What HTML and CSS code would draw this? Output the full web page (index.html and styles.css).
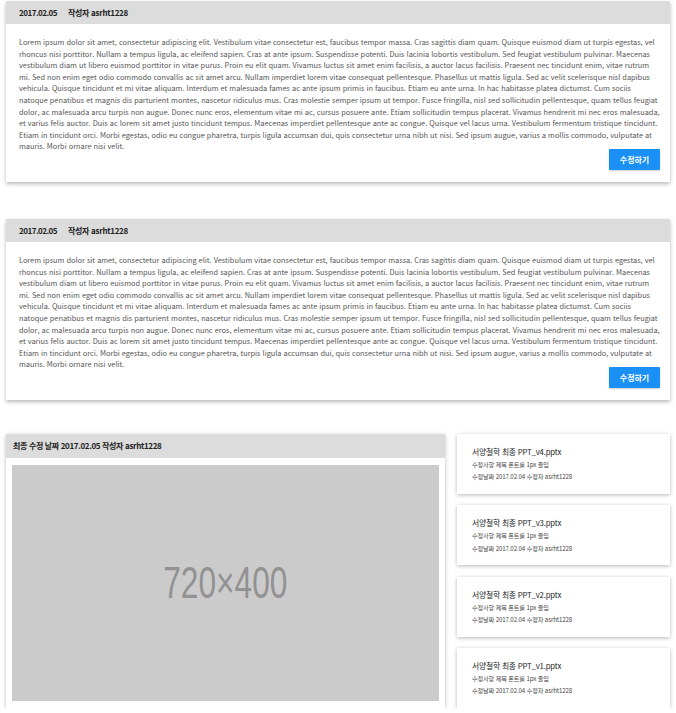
FILE: index.html
```html
<!DOCTYPE html>
<html lang="ko">
<head>
<meta charset="utf-8">
<link rel="stylesheet" href="styles.css">
</head>
<body>
<main class="page">
  <section class="post">
    <div class="post-head"><span class="date">2017.02.05</span><span class="author">작성자 asrht1228</span></div>
    <div class="post-body">
      <p class="text">Lorem ipsum dolor sit amet, consectetur adipiscing elit. Vestibulum vitae consectetur est, faucibus tempor massa. Cras sagittis diam quam. Quisque euismod diam ut turpis egestas, vel rhoncus nisi porttitor. Nullam a tempus ligula, ac eleifend sapien. Cras at ante ipsum. Suspendisse potenti. Duis lacinia lobortis vestibulum. Sed feugiat vestibulum pulvinar. Maecenas vestibulum diam ut libero euismod porttitor in vitae purus. Proin eu elit quam. Vivamus luctus sit amet enim facilisis, a auctor lacus facilisis. Praesent nec tincidunt enim, vitae rutrum mi. Sed non enim eget odio commodo convallis ac sit amet arcu. Nullam imperdiet lorem vitae consequat pellentesque. Phasellus ut mattis ligula. Sed ac velit scelerisque nisl dapibus vehicula. Quisque tincidunt et mi vitae aliquam. Interdum et malesuada fames ac ante ipsum primis in faucibus. Etiam eu ante urna. In hac habitasse platea dictumst. Cum sociis natoque penatibus et magnis dis parturient montes, nascetur ridiculus mus. Cras molestie semper ipsum ut tempor. Fusce fringilla, nisl sed sollicitudin pellentesque, quam tellus feugiat dolor, ac malesuada arcu turpis non augue. Donec nunc eros, elementum vitae mi ac, cursus posuere ante. Etiam sollicitudin tempus placerat. Vivamus hendrerit mi nec eros malesuada, et varius felis auctor. Duis ac lorem sit amet justo tincidunt tempus. Maecenas imperdiet pellentesque ante ac congue. Quisque vel lacus urna. Vestibulum fermentum tristique tincidunt. Etiam in tincidunt orci. Morbi egestas, odio eu congue pharetra, turpis ligula accumsan dui, quis consectetur urna nibh ut nisi. Sed ipsum augue, varius a mollis commodo, vulputate at mauris. Morbi ornare nisi velit.</p>
      <div class="actions"><button class="btn">수정하기</button></div>
    </div>
  </section>

  <section class="post">
    <div class="post-head"><span class="date">2017.02.05</span><span class="author">작성자 asrht1228</span></div>
    <div class="post-body">
      <p class="text">Lorem ipsum dolor sit amet, consectetur adipiscing elit. Vestibulum vitae consectetur est, faucibus tempor massa. Cras sagittis diam quam. Quisque euismod diam ut turpis egestas, vel rhoncus nisi porttitor. Nullam a tempus ligula, ac eleifend sapien. Cras at ante ipsum. Suspendisse potenti. Duis lacinia lobortis vestibulum. Sed feugiat vestibulum pulvinar. Maecenas vestibulum diam ut libero euismod porttitor in vitae purus. Proin eu elit quam. Vivamus luctus sit amet enim facilisis, a auctor lacus facilisis. Praesent nec tincidunt enim, vitae rutrum mi. Sed non enim eget odio commodo convallis ac sit amet arcu. Nullam imperdiet lorem vitae consequat pellentesque. Phasellus ut mattis ligula. Sed ac velit scelerisque nisl dapibus vehicula. Quisque tincidunt et mi vitae aliquam. Interdum et malesuada fames ac ante ipsum primis in faucibus. Etiam eu ante urna. In hac habitasse platea dictumst. Cum sociis natoque penatibus et magnis dis parturient montes, nascetur ridiculus mus. Cras molestie semper ipsum ut tempor. Fusce fringilla, nisl sed sollicitudin pellentesque, quam tellus feugiat dolor, ac malesuada arcu turpis non augue. Donec nunc eros, elementum vitae mi ac, cursus posuere ante. Etiam sollicitudin tempus placerat. Vivamus hendrerit mi nec eros malesuada, et varius felis auctor. Duis ac lorem sit amet justo tincidunt tempus. Maecenas imperdiet pellentesque ante ac congue. Quisque vel lacus urna. Vestibulum fermentum tristique tincidunt. Etiam in tincidunt orci. Morbi egestas, odio eu congue pharetra, turpis ligula accumsan dui, quis consectetur urna nibh ut nisi. Sed ipsum augue, varius a mollis commodo, vulputate at mauris. Morbi ornare nisi velit.</p>
      <div class="actions"><button class="btn">수정하기</button></div>
    </div>
  </section>

  <div class="files">
    <section class="preview">
      <div class="preview-head">최종 수정 날짜 2017.02.05 작성자 asrht1228</div>
      <div class="preview-body">
        <div class="placeholder"><span class="ph-text">720×400</span></div>
      </div>
    </section>
    <ul class="versions">
      <li class="version">
        <div class="v-title">서양철학 최종 PPT_v4.pptx</div>
        <div class="v-sub">수정사항 제목 폰트를 1px 줄임</div>
        <div class="v-sub">수정날짜 2017.02.04 수정자 asrht1228</div>
      </li>
      <li class="version">
        <div class="v-title">서양철학 최종 PPT_v3.pptx</div>
        <div class="v-sub">수정사항 제목 폰트를 1px 줄임</div>
        <div class="v-sub">수정날짜 2017.02.04 수정자 asrht1228</div>
      </li>
      <li class="version">
        <div class="v-title">서양철학 최종 PPT_v2.pptx</div>
        <div class="v-sub">수정사항 제목 폰트를 1px 줄임</div>
        <div class="v-sub">수정날짜 2017.02.04 수정자 asrht1228</div>
      </li>
      <li class="version">
        <div class="v-title">서양철학 최종 PPT_v1.pptx</div>
        <div class="v-sub">수정사항 제목 폰트를 1px 줄임</div>
        <div class="v-sub">수정날짜 2017.02.04 수정자 asrht1228</div>
      </li>
    </ul>
  </div>
</main>
</body>
</html>
```

FILE: styles.css
```css
* { box-sizing: border-box; }
html, body { margin: 0; padding: 0; background: #fff; }
body {
  font-family: "Noto Sans CJK KR", "Noto Sans", sans-serif;
  color: #333;
}
.page {
  padding: 1px 6px 0 6px;
  display: flex;
  flex-direction: column;
}
.post {
  background: #fff;
  box-shadow: 0 2px 4px rgba(0,0,0,0.28);
  margin-bottom: 37px;
}
.post + .post { margin-bottom: 34px; }
.post-head {
  height: 23px;
  background: #dcdcdc;
  display: flex;
  align-items: center;
  padding-left: 13px;
  font-size: 8px;
  font-weight: 700;
  color: #222;
}
.post-head .date { margin-right: 11px; letter-spacing: -0.5px; }
.post-head .author { letter-spacing: -0.3px; }
.post-body {
  padding: 12px 10px 12px 13px;
}
.text {
  margin: 0;
  font-size: 7.4px;
  line-height: 11.6px;
  color: #555;
  letter-spacing: -0.02px;
}
.actions {
  display: flex;
  justify-content: flex-end;
  margin-top: -3px;
}
.btn {
  width: 51px;
  height: 21px;
  border: 0;
  border-radius: 1px;
  background: #1a8ff5;
  color: #fff;
  font-family: inherit;
  font-size: 8px;
  font-weight: 700;
  padding: 0;
  box-shadow: 0 1px 2px rgba(0,0,0,0.2);
}
.files {
  display: grid;
  grid-template-columns: 439px 213px;
  column-gap: 12px;
}
.preview {
  background: #fff;
  box-shadow: 0 1px 4px rgba(0,0,0,0.28);
}
.preview-head {
  height: 24px;
  background: #dcdcdc;
  display: flex;
  align-items: center;
  padding-left: 7px;
  font-size: 8px;
  font-weight: 700;
  color: #222;
  letter-spacing: -0.35px;
}
.preview-body { padding: 7px 6px; }
.placeholder {
  height: 236px;
  background: #cbcbcb;
  display: flex;
  align-items: center;
  justify-content: center;
}
.ph-text {
  font-family: "Liberation Sans", sans-serif;
  font-size: 44px;
  color: #929292;
  display: inline-block;
  transform: scaleX(0.72);
}
.versions {
  list-style: none;
  margin: 0;
  padding: 0;
  display: flex;
  flex-direction: column;
  justify-content: space-between;
}
.version {
  height: 60px;
  background: #fff;
  box-shadow: 0 1px 4px rgba(0,0,0,0.28);
  padding: 12px 10px 0 15px;
}
.v-title {
  font-size: 7.8px;
  line-height: 12px;
  color: #222;
  margin-bottom: 1px;
  letter-spacing: -0.2px;
}
.v-sub {
  font-size: 6.1px;
  line-height: 12.5px;
  color: #444;
  letter-spacing: -0.1px;
}
```
